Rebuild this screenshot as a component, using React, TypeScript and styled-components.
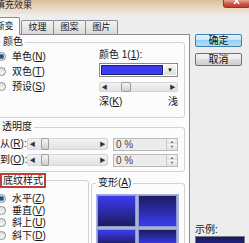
import React from "react";
import styled, { createGlobalStyle } from "styled-components";

const GlobalStyle = createGlobalStyle`
  html, body { margin: 0; padding: 0; background: #ededed; overflow: hidden; }
  #root { width: 249px; height: 243px; overflow: hidden; }
`;

const Window = styled.div`
  margin-left: -20px;
  width: 272px;
  height: 243px;
  display: flex;
  flex-direction: column;
  overflow: hidden;
  background: #ededed;
  font-family: "Liberation Sans", "Noto Sans CJK SC", sans-serif;
  font-size: 10px;
  line-height: 12px;
  color: #151515;
`;

const TitleBar = styled.div`
  flex: none;
  height: 14px;
  display: flex;
  justify-content: space-between;
  align-items: flex-start;
  background: linear-gradient(#d9bc9a, #e9d7c2 55%, #f0e6da);
`;

const Title = styled.span`
  margin: 1px 0 0 16px;
  font-size: 9px;
  line-height: 9px;
  color: #2a2a2a;
`;

const CloseButton = styled.span`
  width: 27px;
  height: 8px;
  margin-right: 2px;
  display: flex;
  justify-content: center;
  align-items: flex-start;
  box-sizing: border-box;
  border: 1px solid #8a3a30;
  border-top: none;
  border-radius: 0 0 3px 3px;
  background: linear-gradient(#e9a595, #c9503e 60%, #b8402f);
`;

const Body = styled.div`
  flex: 1;
  min-height: 0;
  display: flex;
  gap: 5px;
  padding: 3px 0 0 4px;
`;

const LeftCol = styled.div`
  flex: none;
  width: 206px;
  display: flex;
  flex-direction: column;
`;

const TabStrip = styled.div`
  flex: none;
  height: 17px;
  display: flex;
  align-items: flex-end;
  position: relative;
  z-index: 1;
`;

const Tab = styled.div<{ $active?: boolean }>`
  box-sizing: border-box;
  width: ${(p) => (p.$active ? 36 : 33)}px;
  height: ${(p) => (p.$active ? 18 : 14)}px;
  margin-bottom: ${(p) => (p.$active ? -1 : 0)}px;
  margin-left: -1px;
  padding-left: ${(p) => (p.$active ? 5 : 0)}px;
  border: 1px solid #898c95;
  border-bottom: none;
  border-radius: 2px 2px 0 0;
  background: ${(p) =>
    p.$active ? "#fcfcfc" : "linear-gradient(#f3f3f3, #e6e6e6 50%, #d9d9d9)"};
  display: flex;
  justify-content: center;
  align-items: center;
  font-size: 9px;
  line-height: 11px;
  &:first-child { margin-left: 0; }
  &:nth-child(2) { margin-left: 1px; }
`;

const Panel = styled.div`
  flex: 1;
  min-height: 0;
  border: 1px solid #898c95;
  border-bottom: none;
  background: #fcfcfc;
  padding: 1px 4px 0 4px;
  display: flex;
  flex-direction: column;
`;

const Group = styled.fieldset<{ $pl: number; $pr?: number; $pt?: number; $pb?: number; $mt?: number; $h?: number; $w?: number }>`
  margin: ${(p) => p.$mt ?? 0}px 0 0 0;
  padding: ${(p) => p.$pt ?? 0}px ${(p) => p.$pr ?? 0}px ${(p) => p.$pb ?? 0}px ${(p) => p.$pl}px;
  border: 1px solid #d2d2d2;
  border-radius: 3px;
  min-width: 0;
  box-sizing: border-box;
  ${(p) => (p.$h ? `height: ${p.$h}px;` : "")}
  ${(p) => (p.$w ? `width: ${p.$w}px; flex: none;` : "")}
`;

const FlexGroup = styled(Group)`
  flex: 1;
`;

const Legend = styled.legend<{ $ml?: number }>`
  margin-left: ${(p) => p.$ml ?? 0}px;
  padding: 0 2px;
  line-height: 12px;
  font-size: 10px;
`;

const MarkedLegend = styled.legend<{ $ml?: number }>`
  margin-left: ${(p) => p.$ml ?? 0}px;
  padding: 0 1px;
  border: 2px solid #c23b3b;
  background: #fdfdfd;
  line-height: 11px;
  font-size: 10px;
`;

const Mn = styled.u`
  text-underline-offset: 1px;
`;

const ColorBody = styled.div`
  display: flex;
  justify-content: space-between;
`;

const RadioList = styled.div<{ $pt: number }>`
  display: flex;
  flex-direction: column;
  padding-top: ${(p) => p.$pt}px;
`;

const RadioRow = styled.label<{ $h: number }>`
  height: ${(p) => p.$h}px;
  display: flex;
  align-items: center;
  gap: 6px;
  line-height: 11px;
`;

const RadioDot = styled.span<{ $on?: boolean }>`
  flex: none;
  width: 9px;
  height: 9px;
  box-sizing: border-box;
  border-radius: 50%;
  border: 1px solid #8e8f8f;
  background: ${(p) =>
    p.$on
      ? "radial-gradient(circle, #2c4f7a 0 1.8px, #7ea3c8 2.4px, #eef2f6 3.2px)"
      : "linear-gradient(#dcdcdc, #fbfbfb)"};
`;

const ColorRight = styled.div`
  width: 79px;
  display: flex;
  flex-direction: column;
`;

const FieldLabel = styled.div`
  margin-top: 1px;
  line-height: 12px;
`;

const Dropdown = styled.div`
  margin-top: 2px;
  height: 14px;
  box-sizing: border-box;
  border: 1px solid #8a8a8a;
  background: #fff;
  padding: 1px;
  display: flex;
  gap: 1px;
`;

const Swatch = styled.div<{ $c: string }>`
  flex: 1;
  border: 1px solid #20206a;
  background: ${(p) => p.$c};
`;

const DropArrow = styled.div`
  width: 12px;
  display: flex;
  align-items: center;
  justify-content: center;
  background: linear-gradient(#f4f4f4, #dedede);
  font-size: 6px;
  color: #111;
`;

const SliderTrack = styled.div<{ $w: number; $h: number; $mt?: number }>`
  flex: none;
  width: ${(p) => p.$w}px;
  height: ${(p) => p.$h}px;
  margin-top: ${(p) => p.$mt ?? 0}px;
  box-sizing: border-box;
  border: 1px solid #d6d6d6;
  border-radius: 2px;
  background: linear-gradient(#f2f2f2, #e2e2e2);
  display: flex;
  align-items: center;
`;

const SliderArrow = styled.span`
  flex: none;
  width: 9px;
  text-align: center;
  font-size: 6px;
  line-height: 6px;
  color: #333;
`;

const SliderRail = styled.div`
  flex: 1;
  align-self: stretch;
  position: relative;
`;

const SliderThumb = styled.span<{ $w: number }>`
  position: absolute;
  top: -1px;
  bottom: -1px;
  width: ${(p) => p.$w}px;
  box-sizing: border-box;
  border: 1px solid #9c9c9c;
  border-radius: 2px;
  background: linear-gradient(#f6f6f6, #cdcdcd);
`;

const EndLabels = styled.div`
  margin-top: 4px;
  line-height: 12px;
  display: flex;
  justify-content: space-between;
`;

const RowList = styled.div`
  display: flex;
  flex-direction: column;
  gap: 2px;
`;

const SliderRow = styled.div`
  height: 14px;
  display: flex;
  align-items: center;
`;

const RowLabel = styled.span`
  width: 27px;
  flex: none;
  white-space: nowrap;
`;

const Spin = styled.div`
  flex: none;
  width: 65px;
  height: 13px;
  margin-left: 5px;
  box-sizing: border-box;
  border: 1px solid #b9b9b9;
  background: #ececec;
  display: flex;
`;

const SpinText = styled.span`
  flex: 1;
  padding-left: 2px;
  line-height: 11px;
  color: #444;
`;

const SpinButtons = styled.div`
  width: 10px;
  display: flex;
  flex-direction: column;
  border-left: 1px solid #c8c8c8;
`;

const SpinBtn = styled.span`
  flex: 1;
  font-size: 4px;
  line-height: 5px;
  text-align: center;
  color: #666;
  background: linear-gradient(#f6f6f6, #e0e0e0);
`;

const BottomRow = styled.div`
  margin-top: 1px;
  display: flex;
  align-items: flex-start;
  gap: 2px;
`;

const TileGrid = styled.div`
  width: 83px;
  box-sizing: border-box;
  padding: 1px;
  display: grid;
  grid-template-columns: 39px 39px;
  grid-auto-rows: 32px;
  gap: 2px;
  background: #aab3df;
`;

const Tile = styled.div<{ $g: string }>`
  box-sizing: border-box;
  border: 1px solid #8f98c9;
  background: ${(p) => p.$g};
`;

const RightCol = styled.div`
  flex: none;
  width: 50px;
  display: flex;
  flex-direction: column;
`;

const Button = styled.div<{ $primary?: boolean; $mt: number }>`
  flex: none;
  width: 47px;
  height: 13px;
  margin-top: ${(p) => p.$mt}px;
  box-sizing: border-box;
  border: 1px solid ${(p) => (p.$primary ? "#3c7fb1" : "#707070")};
  border-radius: 2px;
  background: ${(p) =>
    p.$primary
      ? "linear-gradient(#e5f4fc, #c4e5f6 50%, #98d1ef 50%, #b3dcf2)"
      : "linear-gradient(#f2f2f2, #ebebeb 50%, #dddddd 50%, #cfcfcf)"};
  display: flex;
  align-items: center;
  justify-content: center;
  line-height: 11px;
  color: #111;
`;

const SampleLabel = styled.div`
  flex: none;
  margin-top: 158px;
  line-height: 12px;
`;

const Preview = styled.div`
  flex: none;
  width: 50px;
  height: 22px;
  box-sizing: border-box;
  border: 1px solid #7a7a7a;
  background: linear-gradient(#1b1b62, #2b2bb0);
`;

const BLUE = "#3b3bf2";
const NAVY = "#1c1c5e";

type SliderProps = { w: number; h: number; value: number; thumb: number; mt?: number };
function Slider({ w, h, value, thumb, mt }: SliderProps) {
  return (
    <SliderTrack $w={w} $h={h} $mt={mt}>
      <SliderArrow>◀</SliderArrow>
      <SliderRail>
        <SliderThumb $w={thumb} style={{ left: `calc((100% - ${thumb}px) * ${value})` }} />
      </SliderRail>
      <SliderArrow>▶</SliderArrow>
    </SliderTrack>
  );
}

function Radio({ on, text, key1, h }: { on?: boolean; text: string; key1: string; h: number }) {
  return (
    <RadioRow $h={h}>
      <RadioDot $on={on} />
      <span>
        {text}(<Mn>{key1}</Mn>)
      </span>
    </RadioRow>
  );
}

function PercentSpin() {
  return (
    <Spin>
      <SpinText>0 %</SpinText>
      <SpinButtons>
        <SpinBtn>▲</SpinBtn>
        <SpinBtn>▼</SpinBtn>
      </SpinButtons>
    </Spin>
  );
}

export default function App() {
  return (
    <>
      <GlobalStyle />
      <Window>
        <TitleBar>
          <Title>填充效果</Title>
          <CloseButton>
            <svg width="8" height="5" viewBox="0 0 8 5">
              <path d="M1 -2 L6 4 M6 -2 L1 4" stroke="#fff" strokeWidth="1.4" fill="none" />
            </svg>
          </CloseButton>
        </TitleBar>
        <Body>
          <LeftCol>
            <TabStrip>
              <Tab $active>渐变</Tab>
              <Tab>纹理</Tab>
              <Tab>图案</Tab>
              <Tab>图片</Tab>
            </TabStrip>
            <Panel>
              <Group $pl={7} $pr={6} $pb={9}>
                <Legend $ml={4}>颜色</Legend>
                <ColorBody>
                  <RadioList $pt={1}>
                    <Radio on text="单色" key1="N" h={15} />
                    <Radio text="双色" key1="T" h={15} />
                    <Radio text="预设" key1="S" h={15} />
                  </RadioList>
                  <ColorRight>
                    <FieldLabel>
                      颜色 1(<Mn>1</Mn>):
                    </FieldLabel>
                    <Dropdown>
                      <Swatch $c={BLUE} />
                      <DropArrow>▼</DropArrow>
                    </Dropdown>
                    <Slider w={79} h={10} value={0.25} thumb={10} mt={5} />
                    <EndLabels>
                      <span>
                        深(<Mn>K</Mn>)
                      </span>
                      <span>浅</span>
                    </EndLabels>
                  </ColorRight>
                </ColorBody>
              </Group>

              <Group $pl={10} $pr={6} $pt={4} $pb={4} $mt={3}>
                <Legend>透明度</Legend>
                <RowList>
                  <SliderRow>
                    <RowLabel>
                      从(<Mn>R</Mn>):
                    </RowLabel>
                    <Slider w={81} h={12} value={0.07} thumb={8} />
                    <PercentSpin />
                  </SliderRow>
                  <SliderRow>
                    <RowLabel>
                      到(<Mn>O</Mn>):
                    </RowLabel>
                    <Slider w={81} h={12} value={0.07} thumb={8} />
                    <PercentSpin />
                  </SliderRow>
                </RowList>
              </Group>

              <BottomRow>
                <Group $pl={7} $pt={4} $h={90} $w={100}>
                  <MarkedLegend $ml={3}>底纹样式</MarkedLegend>
                  <RadioList $pt={0}>
                    <Radio on text="水平" key1="Z" h={12.3} />
                    <Radio text="垂直" key1="V" h={12.3} />
                    <Radio text="斜上" key1="U" h={12.3} />
                    <Radio text="斜下" key1="D" h={12.3} />
                  </RadioList>
                </Group>
                <FlexGroup $pl={4} $pt={5} $mt={4} $h={90}>
                  <Legend>
                    变形(<Mn>A</Mn>)
                  </Legend>
                  <TileGrid>
                    <Tile $g={`linear-gradient(${BLUE}, ${NAVY})`} />
                    <Tile $g={`linear-gradient(${NAVY}, ${BLUE})`} />
                    <Tile $g={`linear-gradient(${BLUE}, ${NAVY} 50%, ${BLUE})`} />
                    <Tile $g={`linear-gradient(${NAVY}, ${BLUE} 50%, ${NAVY})`} />
                  </TileGrid>
                </FlexGroup>
              </BottomRow>
            </Panel>
          </LeftCol>
          <RightCol>
            <Button $primary $mt={17}>确定</Button>
            <Button $mt={6}>取消</Button>
            <SampleLabel>示例:</SampleLabel>
            <Preview />
          </RightCol>
        </Body>
      </Window>
    </>
  );
}
